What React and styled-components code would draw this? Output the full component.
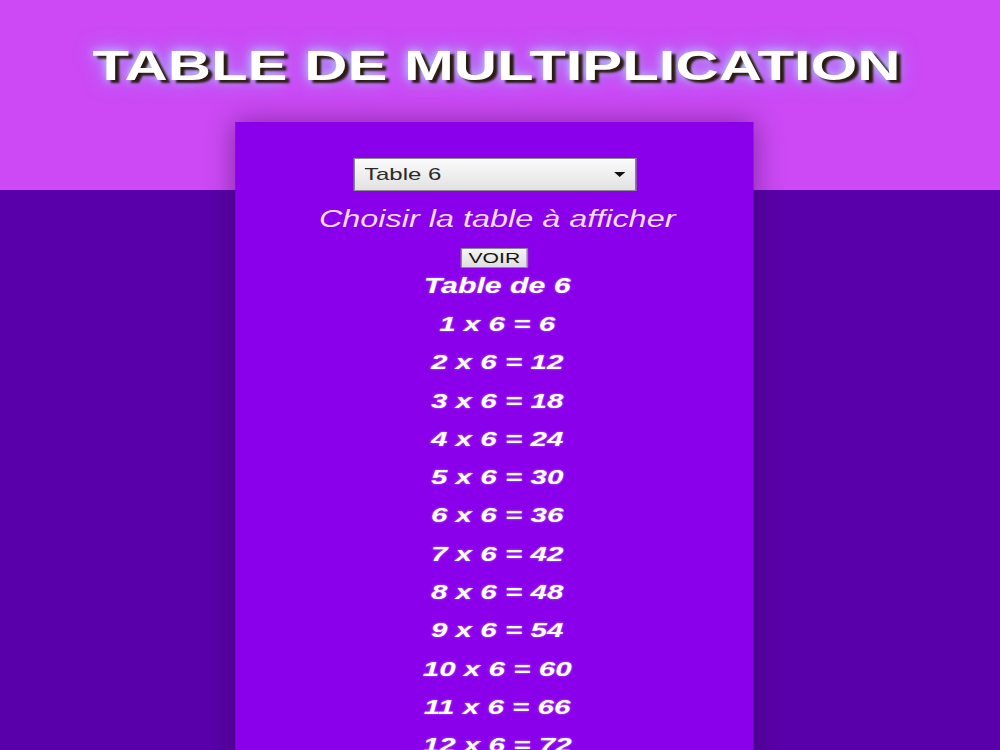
import React, { useState } from "react";
import styled, { createGlobalStyle } from "styled-components";

const NATIVE_WIDTH = 710;
const STRETCH = 1000 / NATIVE_WIDTH;

const GlobalStyle = createGlobalStyle`
  html, body {
    margin: 0;
    padding: 0;
    overflow: hidden;
    background: #5a00aa;
  }
  * { box-sizing: border-box; }
`;

const Page = styled.div`
  width: ${NATIVE_WIDTH}px;
  min-height: 750px;
  padding-right: 8px;
  transform: scaleX(${STRETCH});
  transform-origin: 0 0;
  background: linear-gradient(to bottom, #cc49f5 0, #cc49f5 190px, #5a00aa 190px, #5a00aa 100%);
  font-family: "Liberation Sans", Arial, sans-serif;
  display: flex;
  flex-direction: column;
  align-items: center;
`;

const Title = styled.h1`
  margin: 42px 0 0 3px;
  font-size: 42.5px;
  line-height: 48px;
  font-weight: bold;
  color: #ffffff;
  white-space: nowrap;
  text-shadow: 3px 3px 2px #2a1a10, 0 0 8px rgba(180, 235, 255, 0.9), 0 0 18px rgba(140, 200, 255, 0.75);
`;

const Card = styled.main`
  margin-top: 32px;
  width: 368px;
  min-height: 700px;
  background: #8a00ea;
  box-shadow: 0 0 22px rgba(40, 0, 60, 0.45);
  padding: 36px 0 40px 4px;
  display: flex;
  flex-direction: column;
  align-items: center;
`;

const SelectWrap = styled.div`
  position: relative;
  width: 201px;
  height: 33px;
  margin-right: 4px;
  &::after {
    content: "";
    position: absolute;
    right: 8px;
    top: 14px;
    border-left: 4.5px solid transparent;
    border-right: 4.5px solid transparent;
    border-top: 5px solid #111;
    pointer-events: none;
  }
`;

const Select = styled.select`
  appearance: none;
  -webkit-appearance: none;
  width: 100%;
  height: 100%;
  margin: 0;
  padding: 0 0 0 7px;
  border: 1px solid #8c8c8c;
  border-radius: 0;
  background: linear-gradient(to bottom, #fbfbfb, #e2e2e2);
  box-shadow: inset 0 1px 0 #ffffff;
  font-family: "Liberation Sans", Arial, sans-serif;
  font-size: 17px;
  color: #2a2a2a;
  outline: none;
`;

const Hint = styled.p`
  margin: 14px 0 0;
  font-size: 23px;
  line-height: 28px;
  font-style: italic;
  color: #f3dcff;
`;

const Button = styled.button`
  margin: 15px 4px 0 0;
  height: 20px;
  padding: 0 5px;
  border: 1px solid #8a8a8a;
  border-radius: 1px;
  background: linear-gradient(to bottom, #f4f4f4, #dedede);
  font-family: "Liberation Sans", Arial, sans-serif;
  font-size: 15px;
  line-height: 18px;
  color: #141414;
`;

const TableTitle = styled.h2`
  margin: 0;
  font-size: 21.5px;
  line-height: 37px;
  font-weight: bold;
  font-style: italic;
  color: #ffffff;
  text-shadow: 0 0 2px rgba(255, 255, 255, 0.45);
`;

const Rows = styled.ul`
  list-style: none;
  margin: 0;
  padding: 0;
  display: flex;
  flex-direction: column;
  align-items: center;
`;

const Row = styled.li`
  font-size: 21px;
  line-height: 38.3px;
  font-weight: bold;
  font-style: italic;
  color: #ffffff;
  text-shadow: 0 0 2px rgba(255, 255, 255, 0.45);
`;

export default function App() {
  const [table, setTable] = useState(6);
  const [shown, setShown] = useState(6);
  const rows = Array.from({ length: 12 }, (_, i) => i + 1);

  return (
    <>
      <GlobalStyle />
      <Page>
        <Title>TABLE DE MULTIPLICATION</Title>
        <Card>
          <SelectWrap>
            <Select value={table} onChange={(e) => setTable(Number(e.target.value))}>
              {Array.from({ length: 10 }, (_, i) => i + 1).map((n) => (
                <option key={n} value={n}>
                  Table {n}
                </option>
              ))}
            </Select>
          </SelectWrap>
          <Hint>Choisir la table à afficher</Hint>
          <Button onClick={() => setShown(table)}>VOIR</Button>
          <TableTitle>Table de {shown}</TableTitle>
          <Rows>
            {rows.map((n) => (
              <Row key={n}>
                {n} x {shown} = {n * shown}
              </Row>
            ))}
          </Rows>
        </Card>
      </Page>
    </>
  );
}
